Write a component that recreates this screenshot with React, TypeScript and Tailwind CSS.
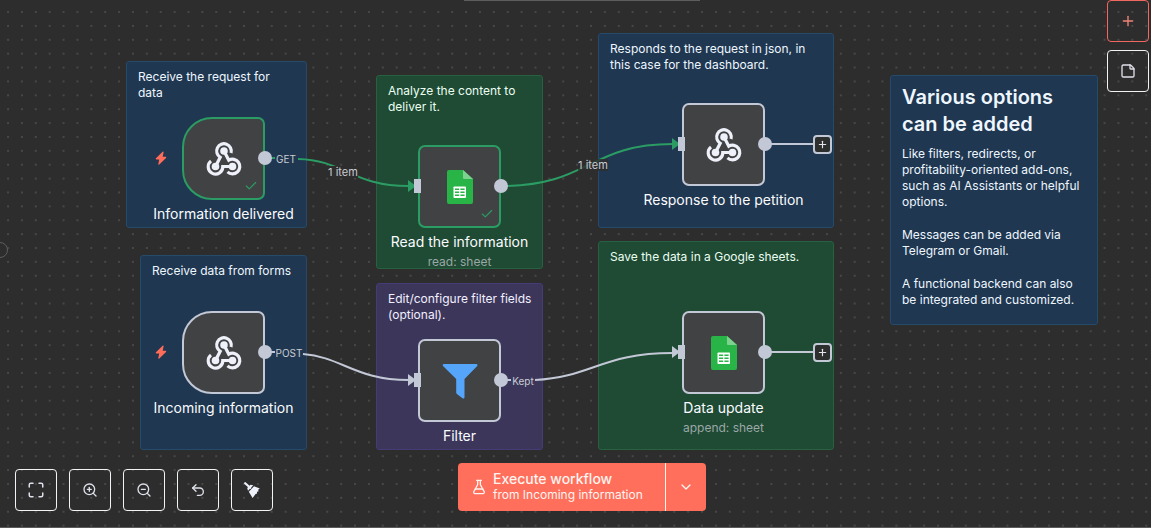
import type { ReactNode } from "react";
import { ChevronDown, FlaskConical, Maximize, Plus, StickyNote, Undo2, ZoomIn, ZoomOut, Check } from "lucide-react";

function Dots() {
  return (
    <svg className="absolute inset-0 h-full w-full" aria-hidden="true">
      <defs>
        <pattern id="dots" x="1.1" y="5.1" width="13.88" height="13.88" patternUnits="userSpaceOnUse">
          <circle cx="6.94" cy="6.94" r="0.75" fill="#6c6c6c" />
        </pattern>
      </defs>
      <rect width="100%" height="100%" fill="url(#dots)" />
    </svg>
  );
}

function WebhookIcon() {
  return (
    <svg width="36" height="36" viewBox="0 0 36 36" fill="none" stroke="#eef0fa" strokeWidth="3.2" aria-hidden="true">
      <path d="M9.5 25.5 14.2 16.3A7.3 7.3 0 1 1 25 12" />
      <path d="M18 10l4.8 9.2A7.3 7.3 0 1 1 21.5 30.8" />
      <path d="M26.5 25.5H16.8A7.3 7.3 0 1 1 5 20" />
      <g fill="#eef0fa" stroke="none">
        <circle cx="18" cy="10" r="3.8" />
        <circle cx="9.5" cy="25.5" r="3.8" />
        <circle cx="26.5" cy="25.5" r="3.8" />
      </g>
    </svg>
  );
}

function SheetsIcon() {
  return (
    <svg width="26" height="34" viewBox="0 0 26 34" aria-hidden="true">
      <path d="M2 0h14l10 9v23a2 2 0 0 1-2 2H2a2 2 0 0 1-2-2V2a2 2 0 0 1 2-2z" fill="#28b446" />
      <path d="M16 0l10 9H17a1 1 0 0 1-1-1z" fill="#7ed28f" />
      <rect x="6.5" y="16.5" width="12.5" height="11.5" rx="0.8" fill="#fff" />
      <path d="M8 19.3h4.2M13.4 19.3h4.2M8 22.3h4.2M13.4 22.3h4.2M8 25.3h4.2M13.4 25.3h4.2" stroke="#28b446" strokeWidth="1.5" />
    </svg>
  );
}

function FilterIcon() {
  return (
    <svg width="36" height="36" viewBox="0 0 36 36" aria-hidden="true">
      <path d="M1.8 1h32.6c1 0 1.5 1.2.8 2L22.5 16v18.2c0 1.1-1.2 1.6-2 1l-5.6-4.3a1.8 1.8 0 0 1-.7-1.4V16L1 3C.3 2.2.8 1 1.8 1z" fill="#55a6fb" />
    </svg>
  );
}

function BroomIcon() {
  return (
    <svg width="16" height="16" viewBox="0 0 16 16" aria-hidden="true">
      <path d="M1.2 1.2l5 4.6" stroke="#eef0fa" strokeWidth="2.2" strokeLinecap="round" />
      <path d="M9.3 3.3 4 8.8l-.8-2.7 3.3-3.4z" fill="#eef0fa" />
      <path d="M10 4.3l5.8 2.3-1.6 1.2.3 1.7-1.6.3.2 1.7-1.5.4-3 4L4.8 9.8z" fill="#eef0fa" />
    </svg>
  );
}

function Bolt({ place }: { place: string }) {
  return (
    <svg className={"absolute " + place} width="12" height="14" viewBox="0 0 12 14" aria-hidden="true">
      <path d="M7.6.8 1 7.3c-.6.6-.2 1.2.4 1.2h2.8L3.3 13c-.1.7.5.9 1 .4L11 7c.5-.5.2-1.2-.5-1.2H7.7l.9-4.5C8.7.6 8.1.3 7.6.8z" fill="#ff6d5a" />
    </svg>
  );
}

const tones = {
  blue: "border-[#264a69] bg-[#1f3750] text-[#eef6ff]",
  green: "border-[#28613f] bg-[#1f4a33] text-[#eafff2]",
  purple: "border-[#443b77] bg-[#3b365a] text-[#f3f0ff]",
};

function Sticky({ tone, place, children }: { tone: keyof typeof tones; place: string; children: ReactNode }) {
  return (
    <section className={"absolute rounded-[3px] border pt-[7px] pr-[9px] pl-[11px] text-xs leading-4 " + tones[tone] + " " + place}>
      {children}
    </section>
  );
}

type NodeProps = {
  place: string;
  title: string;
  subtitle?: string;
  trigger?: boolean;
  input?: boolean;
  done?: boolean;
  children: ReactNode;
};

function WorkflowNode({ place, title, subtitle, trigger, input, done, children }: NodeProps) {
  return (
    <article className={"absolute flex w-[83px] flex-col items-center " + place}>
      <div
        className={
          "relative flex h-[83px] w-full items-center justify-center border-2 bg-[#414244] " +
          (done ? "border-[#2b9c63] " : "border-[#c3c8d6] ") +
          (trigger ? "rounded-l-[30px] rounded-r-[7px]" : "rounded-[7px]")
        }
      >
        {children}
        {done && <Check size={14} strokeWidth={2} className="absolute right-[5px] bottom-[5px] text-[#2b9c63]" />}
        {input && <span className="absolute top-[32px] -left-[6px] h-[14px] w-[7px] bg-[#c3c8d6]" />}
        <span className="absolute top-[32px] -right-[9px] size-[14px] rounded-full bg-[#c3c8d6]" />
      </div>
      <h2 className="mt-1 text-sm leading-5 whitespace-nowrap text-[#fafcff]">{title}</h2>
      {subtitle && <p className="mt-[2px] text-xs leading-4 whitespace-nowrap text-[#9aa8a6]">{subtitle}</p>}
    </article>
  );
}

function EdgeLabel({ place, children }: { place: string; children: ReactNode }) {
  return <span className={"absolute -translate-x-1/2 -translate-y-1/2 whitespace-nowrap text-[#c9ccd2] " + place}>{children}</span>;
}

function Edges() {
  return (
    <svg className="absolute top-0 left-0" width="900" height="460" fill="none" strokeWidth="2" aria-hidden="true">
      <g stroke="#2b9c63">
        <path d="M265 158H275M298 159C344 160 352 186 409 186" />
        <path d="M501 186C590 186 588 144 673 144" />
      </g>
      <g stroke="#c3c8d6">
        <path d="M265 352H275M303 354C342 357 355 380 409 380" />
        <path d="M501 380H511M535 380C592 377 602 353 673 353" />
        <path d="M765 144H813M765 352H813" />
      </g>
      <g fill="#2b9c63">
        <path d="M408 180l8 6-8 6zM672 138l8 6-8 6z" />
      </g>
      <g fill="#c3c8d6">
        <path d="M408 374l8 6-8 6zM672 346l8 6-8 6z" />
      </g>
    </svg>
  );
}

function AddNext({ place }: { place: string }) {
  return (
    <button aria-label="Add node" className={"absolute flex size-[19px] items-center justify-center rounded-[4px] border-2 border-[#c3c8d6] bg-[#2d2e2e] text-[#e4e6ec] " + place}>
      <Plus size={11} strokeWidth={2.5} />
    </button>
  );
}

function ToolButton({ label, accent, children }: { label: string; accent?: boolean; children: ReactNode }) {
  return (
    <button
      aria-label={label}
      className={
        "flex size-[42px] items-center justify-center rounded-[4px] border " +
        (accent ? "border-[#f2675f] text-[#f08478]" : "border-[#f2f3f5] text-[#dfe1ea]")
      }
    >
      {children}
    </button>
  );
}

export default function App() {
  return (
    <main className="relative h-screen overflow-hidden border-b border-[#5a5b5b] bg-[#2d2d2d] font-['Inter',sans-serif]">
      <Dots />
      <div className="absolute top-0 left-[464px] h-px w-[236px] bg-[#5c5d5d]" />
      <div className="absolute top-[242px] -left-[8px] size-4 rounded-full border border-[#5c5d5d]" />

      <Sticky tone="blue" place="left-[126px] top-[61px] h-[167px] w-[181px]">
        <p>Receive the request for data</p>
      </Sticky>
      <Sticky tone="green" place="left-[376px] top-[75px] h-[194px] w-[167px]">
        <p>Analyze the content to deliver it.</p>
      </Sticky>
      <Sticky tone="blue" place="left-[598px] top-[33px] h-[195px] w-[236px]">
        <p>Responds to the request in json, in this case for the dashboard.</p>
      </Sticky>
      <Sticky tone="blue" place="left-[140px] top-[255px] h-[195px] w-[167px]">
        <p>Receive data from forms</p>
      </Sticky>
      <Sticky tone="purple" place="left-[376px] top-[283px] h-[167px] w-[167px]">
        <p>Edit/configure filter fields (optional).</p>
      </Sticky>
      <Sticky tone="green" place="left-[598px] top-[241px] h-[209px] w-[236px]">
        <p>Save the data in a Google sheets.</p>
      </Sticky>
      <Sticky tone="blue" place="left-[890px] top-[75px] h-[250px] w-[208px]">
        <h1 className="pt-px text-xl leading-[27px] font-semibold">Various options can be added</h1>
        <p className="mt-2">Like filters, redirects, or profitability-oriented add-ons, such as AI Assistants or helpful options.</p>
        <p className="mt-[17px]">Messages can be added via Telegram or Gmail.</p>
        <p className="mt-[17px]">A functional backend can also be integrated and customized.</p>
      </Sticky>

      <Edges />

      <WorkflowNode place="left-[182px] top-[117px]" title="Information delivered" trigger done>
        <WebhookIcon />
      </WorkflowNode>
      <WorkflowNode place="left-[418px] top-[145px]" title="Read the information" subtitle="read: sheet" input done>
        <SheetsIcon />
      </WorkflowNode>
      <WorkflowNode place="left-[682px] top-[103px]" title="Response to the petition" input>
        <WebhookIcon />
      </WorkflowNode>
      <WorkflowNode place="left-[182px] top-[311px]" title="Incoming information" trigger>
        <WebhookIcon />
      </WorkflowNode>
      <WorkflowNode place="left-[418px] top-[339px]" title="Filter" input>
        <FilterIcon />
      </WorkflowNode>
      <WorkflowNode place="left-[682px] top-[311px]" title="Data update" subtitle="append: sheet" input>
        <SheetsIcon />
      </WorkflowNode>

      <Bolt place="left-[155px] top-[151px]" />
      <Bolt place="left-[155px] top-[345px]" />
      <AddNext place="left-[813px] top-[135px]" />
      <AddNext place="left-[813px] top-[343px]" />

      <EdgeLabel place="left-[286px] top-[159px] text-[10px]">GET</EdgeLabel>
      <EdgeLabel place="left-[289px] top-[353px] text-[10px]">POST</EdgeLabel>
      <EdgeLabel place="left-[523px] top-[381px] text-[10px]">Kept</EdgeLabel>
      <EdgeLabel place="left-[343px] top-[172px] bg-[#2d2d2d] text-[11px] leading-3">1 item</EdgeLabel>
      <EdgeLabel place="left-[593px] top-[165px] bg-[#2d2d2d]/80 text-[11px] leading-3">1 item</EdgeLabel>

      <aside className="absolute top-0 right-[2px] flex flex-col gap-2">
        <ToolButton label="Add node" accent>
          <Plus size={16} strokeWidth={2} />
        </ToolButton>
        <ToolButton label="Add sticky note">
          <StickyNote size={16} strokeWidth={2} />
        </ToolButton>
      </aside>

      <div className="absolute bottom-4 left-[15px] flex gap-3">
        <ToolButton label="Zoom to fit">
          <Maximize size={18} strokeWidth={2} />
        </ToolButton>
        <ToolButton label="Zoom in">
          <ZoomIn size={16} strokeWidth={2} />
        </ToolButton>
        <ToolButton label="Zoom out">
          <ZoomOut size={16} strokeWidth={2} />
        </ToolButton>
        <ToolButton label="Undo">
          <Undo2 size={16} strokeWidth={2} />
        </ToolButton>
        <ToolButton label="Tidy up">
          <BroomIcon />
        </ToolButton>
      </div>

      <div className="pointer-events-none absolute inset-x-0 bottom-4 flex justify-center pl-[13px]">
        <div className="pointer-events-auto flex h-12 overflow-hidden rounded-[4px] bg-[#ff6f5c] text-[#fff4f0]">
          <button className="flex w-[207px] items-center gap-[6px] pl-[13px] text-left">
            <FlaskConical size={16} strokeWidth={2} />
            <span className="flex flex-col whitespace-nowrap">
              <span className="text-sm leading-4 font-medium">Execute workflow</span>
              <span className="text-xs leading-4">from Incoming information</span>
            </span>
          </button>
          <button aria-label="Choose trigger" className="flex w-[41px] items-center justify-center border-l border-[#fff4f0]">
            <ChevronDown size={16} strokeWidth={2} />
          </button>
        </div>
      </div>
    </main>
  );
}
